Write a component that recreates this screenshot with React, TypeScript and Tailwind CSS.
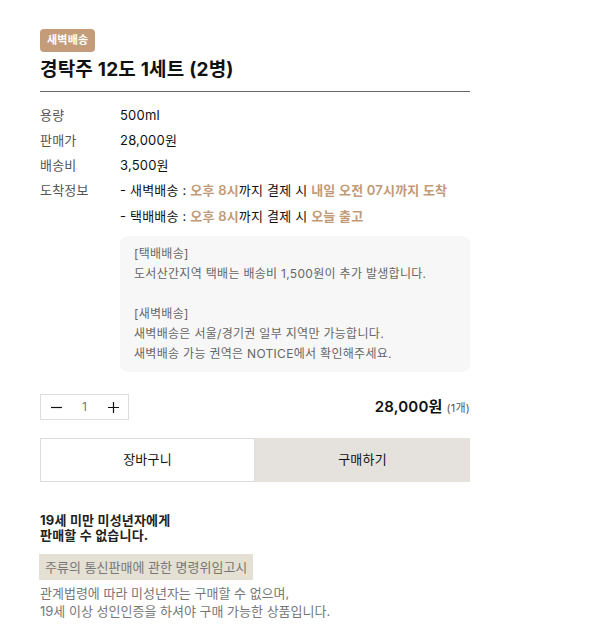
import React from "react";

const font = {
  fontFamily: '"Inter", "Noto Sans CJK KR", sans-serif',
};

const InfoRow: React.FC<{ label: string; children: React.ReactNode }> = ({ label, children }) => (
  <div className="flex">
    <div className="w-[80px] shrink-0 text-[#555]">{label}</div>
    <div className="flex-1 text-[#111]">{children}</div>
  </div>
);

const Hl: React.FC<{ children: React.ReactNode }> = ({ children }) => (
  <span className="text-[#c29a77] font-semibold">{children}</span>
);

const App: React.FC = () => {
  return (
    <div className="min-h-screen bg-white tracking-[0.2px]" style={font}>
      <div className="w-[430px] ml-[40px] pt-[29px]">
        <div className="flex w-fit items-center h-[23px] px-[7px] rounded-[4px] bg-[#c59c7a] text-white text-[11px] font-bold">
          새벽배송
        </div>
        <h1 className="mt-[5px] text-[19px] font-bold text-[#111] leading-[26px]">경탁주 12도 1세트 (2병)</h1>
        <div className="mt-[8px] h-px bg-[#666]" />

        <div className="mt-[14px] flex flex-col gap-[6px] text-[13px] leading-[19px]">
          <InfoRow label="용량">500ml</InfoRow>
          <InfoRow label="판매가">28,000원</InfoRow>
          <InfoRow label="배송비">3,500원</InfoRow>
          <InfoRow label="도착정보">
            <div className="flex flex-col gap-[7px]">
              <div>
                - 새벽배송 : <Hl>오후 8시</Hl>까지 결제 시 <Hl>내일 오전 07시까지 도착</Hl>
              </div>
              <div>
                - 택배배송 : <Hl>오후 8시</Hl>까지 결제 시 <Hl>오늘 출고</Hl>
              </div>
            </div>
            <div className="mt-[10px] rounded-[8px] bg-[#f7f7f7] px-[14px] py-[8px] text-[12px] leading-[20px] tracking-[0.3px] text-[#666]">
              <p>[택배배송]</p>
              <p>도서산간지역 택배는 배송비 1,500원이 추가 발생합니다.</p>
              <p>&nbsp;</p>
              <p>[새벽배송]</p>
              <p>새벽배송은 서울/경기권 일부 지역만 가능합니다.</p>
              <p>새벽배송 가능 권역은 NOTICE에서 확인해주세요.</p>
            </div>
          </InfoRow>
        </div>

        <div className="mt-[22px] flex items-center justify-between">
          <div className="flex items-center h-[26px] w-[89px] border border-[#ddd] text-[#111]">
            <button className="w-[30px] h-full flex items-center justify-center">
              <svg width="11" height="11" viewBox="0 0 11 11"><path d="M0 5.5h11" stroke="#111" strokeWidth="1.2" /></svg>
            </button>
            <span className="flex-1 text-center text-[12px] text-[#777]">1</span>
            <button className="w-[30px] h-full flex items-center justify-center">
              <svg width="11" height="11" viewBox="0 0 11 11"><path d="M0 5.5h11M5.5 0v11" stroke="#111" strokeWidth="1.2" /></svg>
            </button>
          </div>
          <div className="flex items-baseline gap-[4px] text-[#111]">
            <span className="text-[15px] font-semibold">28,000원</span>
            <span className="text-[11px] text-[#555]">(1개)</span>
          </div>
        </div>

        <div className="mt-[18px] grid grid-cols-2 h-[44px] text-[13px] text-[#111]">
          <button className="border border-[#ddd] bg-white">장바구니</button>
          <button className="bg-[#e5e1dc] border border-[#e5e1dc]">구매하기</button>
        </div>

        <div className="mt-[31px] text-[13px] font-bold leading-[15px] text-[#222]">
          <p>19세 미만 미성년자에게</p>
          <p>판매할 수 없습니다.</p>
        </div>
        <div className="mt-[11px] w-fit -ml-px bg-[#e4e0d4] px-[6px] py-[4px] text-[13px] leading-[18px] tracking-normal text-[#777]">
          주류의 통신판매에 관한 명령위임고시
        </div>
        <div className="mt-[4px] text-[13px] leading-[18px] tracking-normal text-[#777]">
          <p>관계법령에 따라 미성년자는 구매할 수 없으며,</p>
          <p>19세 이상 성인인증을 하셔야 구매 가능한 상품입니다.</p>
        </div>
      </div>
    </div>
  );
};

export default App;
